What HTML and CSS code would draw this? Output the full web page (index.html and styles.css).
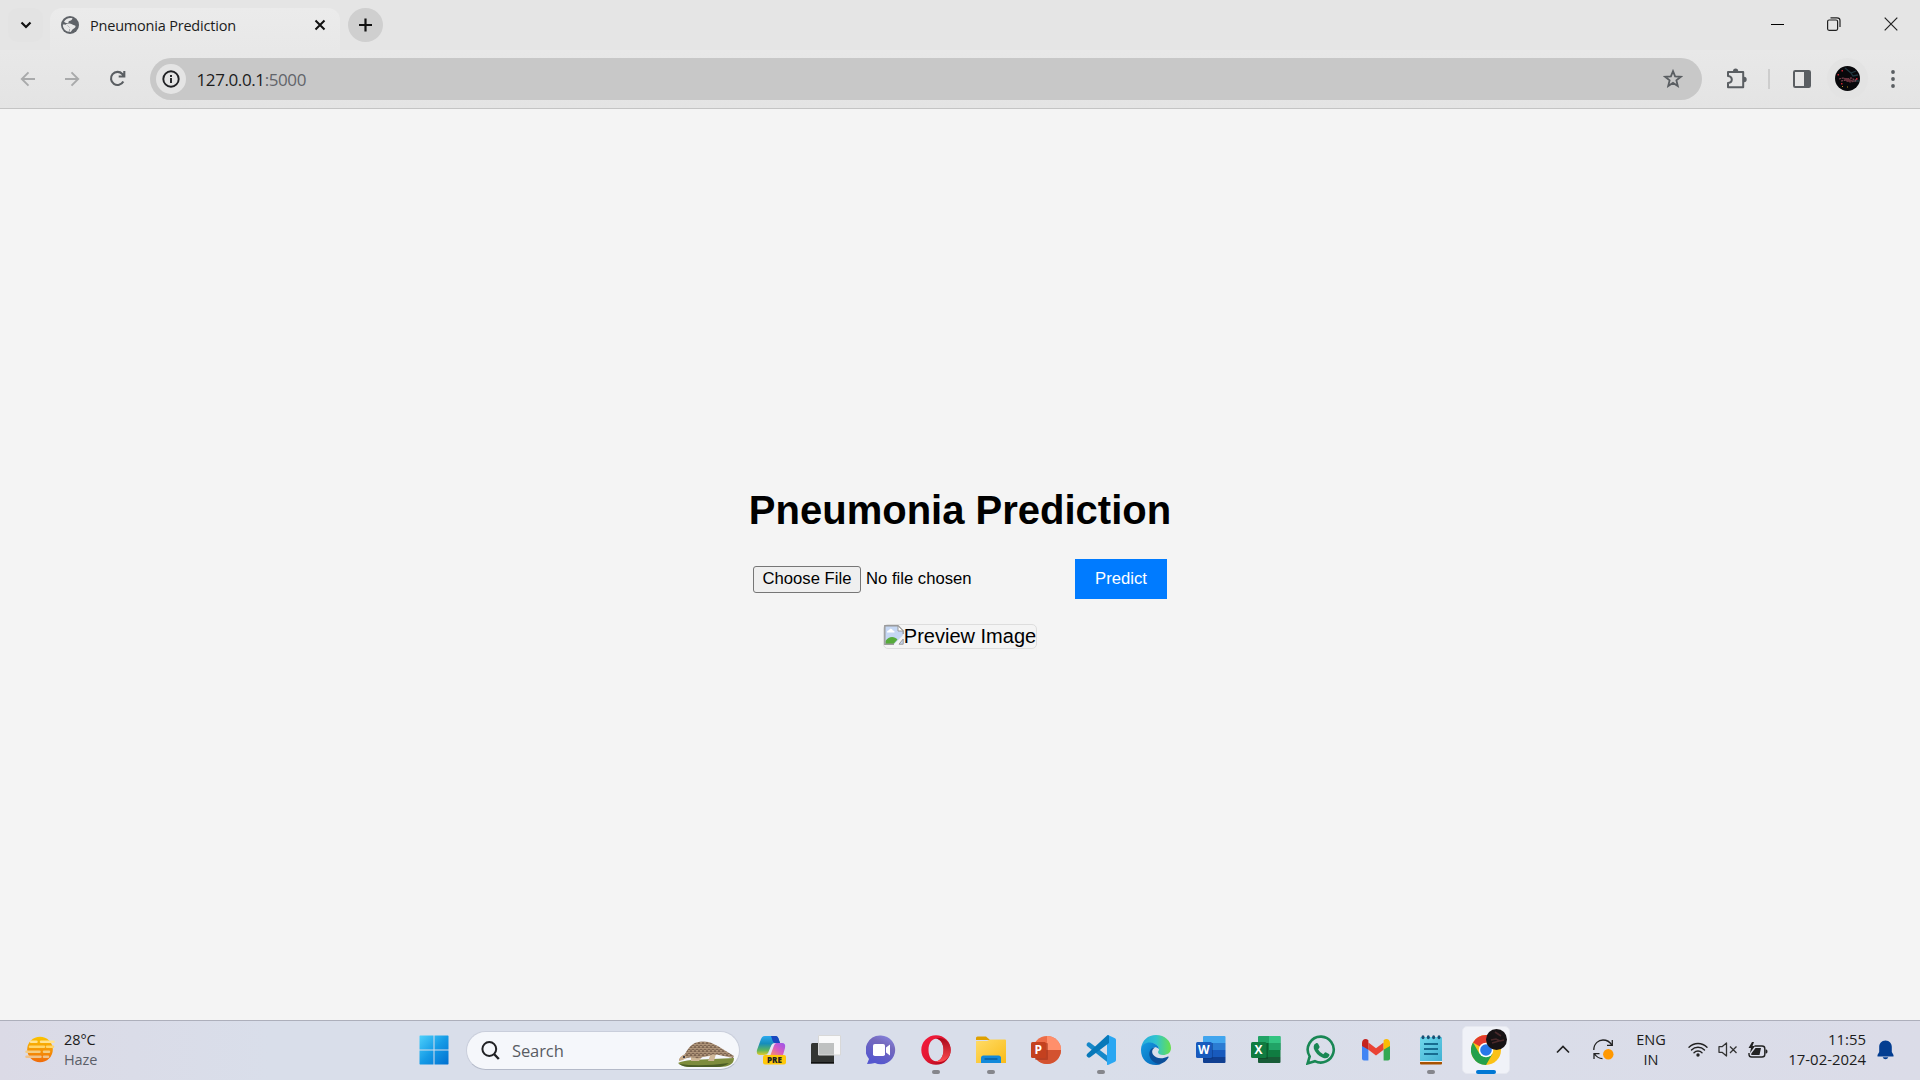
FILE: index.html
```html
<!DOCTYPE html>
<html lang="en">
<head>
<meta charset="utf-8">
<title>Pneumonia Prediction</title>
<link rel="stylesheet" href="styles.css">
</head>
<body>
<div class="screen">
  <header class="tabstrip">
    <div class="tabsearch"><svg width="12" height="8" viewBox="0 0 12 8"><path d="M1.500 1.500 6 6l4.500-4.500" fill="none" stroke="#111" stroke-width="2.200"/></svg></div>
    <div class="tab">
      <svg width="18" height="18" viewBox="0 0 18 18"><circle cx="9" cy="9" r="9" fill="#5f6368"/><path d="M11.500 2.300C8 1.200 4.500 3 3 5.700c1.200 1.200 2.800 1.500 4.500 1.500-.3-1.500.2-2.400 1.700-2.500.9 0 2-.8 2.300-2.400zM1.900 8.500c2 .1 4.800.2 5.600 2 .4 1 1.500.8 1.700 1.800.2 1-1.100 1.100-1.200 2.200l-.2 1.300C4.300 15.300 1.700 12.300 1.900 8.500z" fill="#e9e9e9"/><path d="M5 8.200c2-.8 4.500-1 6 .1 1.200.9 1.800 1 2.900 1.200 1 .2.700 1.600 0 2.300-1.200 1.200-2.500 1.300-3.300 2.900-.4.700-1.100 1.300-1.900 1.400-.8-.5-.2-1.900.3-2.900.4-.9-.5-1.500-1-2.200C7 9.500 6 9.200 5 9z" fill="#e9e9e9"/></svg>
      <span class="tab-title">Pneumonia Prediction</span>
      <svg class="tab-close" width="12" height="12" viewBox="0 0 12 12"><path d="m1.500 1.500 9 9m0-9-9 9" stroke="#111" stroke-width="2"/></svg>
    </div>
    <div class="newtab"><svg width="13" height="14" viewBox="0 0 13 14"><path d="M6.500.5v13M0 7h13" stroke="#111" stroke-width="2.200"/></svg></div>
    <div class="window-controls">
      <svg width="14" height="14" viewBox="0 0 14 14"><path d="M1 7.500h13" stroke="#000"/></svg>
      <svg width="14" height="14" viewBox="0 0 14 14"><rect x=".6" y="3" width="10" height="10.300" rx="1.500" fill="none" stroke="#222" stroke-width="1.200"/><path d="M3.500.8H10Q13 .8 13 3.500V10" fill="none" stroke="#222" stroke-width="1.200"/></svg>
      <svg width="14" height="14" viewBox="0 0 14 14"><path d="m.7.700 12.600 12.600m0-12.600L.7 13.300" stroke="#222" stroke-width="1.200"/></svg>
    </div>
  </header>
  <nav class="toolbar">
    <div class="nav-buttons">
      <svg width="15" height="16" viewBox="0 0 15 16"><path d="M15 8H2M8.500 1.300 1.800 8l6.700 6.700" fill="none" stroke="#a9aaab" stroke-width="1.900"/></svg>
      <svg width="15" height="16" viewBox="0 0 15 16"><path d="M0 8h13M6.500 1.300 13.200 8l-6.700 6.700" fill="none" stroke="#a9aaab" stroke-width="1.900"/></svg>
      <svg width="17" height="17" viewBox="0 0 17 17"><path d="M14.300 11.400A6.500 6.500 0 1 1 13.300 4l1.500 1.700M15.300 1v5.500H9.700" fill="none" stroke="#5a5e62" stroke-width="2.100"/></svg>
    </div>
    <div class="omnibox">
      <div class="site-info"><svg width="18" height="18" viewBox="0 0 18 18"><circle cx="9" cy="9" r="7.700" fill="none" stroke="#202124" stroke-width="1.900"/><path d="M9 8v5M9 5v1.900" stroke="#202124" stroke-width="1.900"/></svg></div>
      <span class="url">127.0.0.1<span class="port">:5000</span></span>
      <svg class="star" width="20" height="20" viewBox="0 0 20 20"><path d="m10 2.200 2.100 5.200 5.700.4-4.400 3.600 1.400 5.600-4.800-3.100-4.800 3.100 1.400-5.600L2.200 7.800l5.700-.4z" fill="none" stroke="#5a5e62" stroke-width="1.800"/></svg>
    </div>
    <svg class="ext" width="22" height="22" viewBox="0 0 22 22"><path d="M2 4h15.200v15.200H2v-4.100c3-.3 3.800-1.700 3.800-3.500S5 8.200 2 7.900z" fill="none" stroke="#5a5e62" stroke-width="2" stroke-linejoin="round"/><path d="M7 3a2.600 2.600 0 0 1 5.200 0zM18 8.800a2.600 2.600 0 0 1 0 5.400z" fill="#5a5e62"/></svg>
    <span class="divider"></span>
    <svg class="panel" width="18" height="18" viewBox="0 0 18 18"><rect x="1" y="1" width="16" height="16" rx="1.200" fill="none" stroke="#5a5e62" stroke-width="2"/><path d="M11 1h6v16h-6z" fill="#5a5e62"/></svg>
    <div class="profile"><svg width="25" height="25" viewBox="0 0 25 25"><circle cx="12.500" cy="12.500" r="12.500" fill="#08080b"/><path d="m10 2 6 5 5-2M16 7l2 3 5-1M18 15h6" stroke="#203840" stroke-width="1.300" fill="none"/><path d="m4 13 4-1 4 1 4-1 4 2 3-1M6 15l5-1 4 2 6-1" stroke="#7d4450" stroke-width="1.200" stroke-dasharray="2 .8" fill="none"/><path d="M8 12h4l5 2 3 1-8 1z" fill="#66313c"/><path d="M2.500 8H4v1.500H2.500zM6.500 4H8v1.500H6.500zM6 17h1.500v1.500H6zM21 12h1.500v1.500H21z" fill="#c22330"/><path d="M7 20h1v1H7zM12 20.500h1v1h-1z" fill="#b58b27"/></svg></div>
    <svg class="menu" width="4" height="18" viewBox="0 0 4 18"><g fill="#5a5e62"><circle cx="2" cy="2" r="1.900"/><circle cx="2" cy="9" r="1.900"/><circle cx="2" cy="16" r="1.900"/></g></svg>
  </nav>

  <main class="page">
    <h1 class="heading">Pneumonia Prediction</h1>
    <form class="upload">
      <button type="button" class="choose">Choose File</button>
      <span class="file-name">No file chosen</span>
      <button type="button" class="predict">Predict</button>
    </form>
    <div class="preview">
      <svg width="20" height="20" viewBox="0 0 20 20"><path d="M.8.800h13.200l5.200 5.200v4L10 19.300H.8z" fill="#c5d7f3"/><path d="M3 7.500C3 5 5.500 5.600 5.800 4c2-.9 3 .8 3 1.600 1.500 0 1.800 1 1.700 1.900z" fill="#fff"/><path d="M1.500 19v-3c3-5 9-5 12-1.500L9.500 19z" fill="#56ab3a"/><path d="M10 19.300.8 19.200V.8H14l5.200 5.200v3" fill="none" stroke="#9a9a9a" stroke-width="1.400"/><path d="M14 .8V6h5.200z" fill="#fff" stroke="#9a9a9a"/><path d="M15 19.200h4.200V14z" fill="#c5d7f3" stroke="#9a9a9a"/></svg><span>Preview Image</span>
    </div>
  </main>

  <footer class="taskbar">
    <div class="weather">
      <svg width="31" height="27" viewBox="0 0 31 27"><defs><linearGradient id="sun" x2="0" y2="1"><stop stop-color="#fbc400"/><stop offset="1" stop-color="#f06a0b"/></linearGradient></defs><circle cx="15" cy="13.500" r="12.800" fill="url(#sun)"/><g stroke-width="2.500" stroke-linecap="round"><path d="M6 5.700h5.500M16 5.700h12.500" stroke="#ffe391"/><path d="M5 10.700h14M22 10.700h6" stroke="#ffd66a"/><path d="M1.500 15.700h13M19 15.700h5" stroke="#f3cc83"/><path d="M1.500 20.700h14M19 20.700h4" stroke="#f0c288"/></g></svg>
      <div class="weather-text"><span>28°C</span><span class="muted">Haze</span></div>
    </div>
    <div class="start"><svg width="30" height="30" viewBox="0 0 30 30"><defs><linearGradient id="win" x2="1" y2="1"><stop stop-color="#4dd0fb"/><stop offset=".5" stop-color="#159be6"/><stop offset="1" stop-color="#006fd0"/></linearGradient></defs><path d="M1 .5h13.500v14H.5V1zM15.500.5H29l.5.5v13.500h-14zM.5 15.500h14v14H1l-.5-.5zM15.500 15.500h14V29l-.5.500H15.500z" fill="url(#win)"/></svg></div>
    <div class="search">
      <svg width="19" height="19" viewBox="0 0 19 19"><circle cx="8.300" cy="8" r="6.900" fill="none" stroke="#202124" stroke-width="2"/><path d="m13 13 4.800 5" stroke="#202124" stroke-width="2.400"/></svg>
      <span class="search-text">Search</span>
      <svg class="pangolin" width="58" height="28" viewBox="0 0 58 28"><defs><pattern id="scales" width="4" height="4" patternUnits="userSpaceOnUse"><path d="M0 0h4v4H0z" fill="#b0967a"/><path d="M0 1q2 3 4 0M-2 3q2 3 4 0M2 3q2 3 4 0" fill="none" stroke="#675040" stroke-width=".8"/></pattern></defs><path d="M1 23q4-2 14-3l42-2q0 9-15 9H14q-9 0-13-4z" fill="#7d8c3c"/><path d="M2 24q22 3 50-1-5 4-13 4H14q-8 0-12-3z" fill="#4b5d26"/><path d="M14 15v6h8l3-4 8-1-2 5h6l2-7z" fill="#cfb797"/><path d="M2 20q1-3 6-6C12 6 17 1.500 26 1.500c8 0 13 3.500 18 6.500l13 8-1 2-14-3q-5-1-8 0L20 18.500q-4-2-10-.5-5 1-8 3z" fill="url(#scales)"/><path d="M2 20q1-4 5-5l3 2-4 3-4 1z" fill="#c9ac8c"/><circle cx="7" cy="17" r="1" fill="#172033"/></svg>
    </div>
    <div class="apps">
      <div class="app"><svg width="30" height="30" viewBox="0 0 30 30"><defs><linearGradient id="cpa" x2="0" y2="1"><stop stop-color="#2ba9ef"/><stop offset=".4" stop-color="#168dbb"/><stop offset=".75" stop-color="#5db45d"/><stop offset="1" stop-color="#e5cb28"/></linearGradient><linearGradient id="cpb" x1="1" x2="0" y2="1"><stop stop-color="#9755ed"/><stop offset=".5" stop-color="#d65bc2"/><stop offset="1" stop-color="#ff985b"/></linearGradient></defs><path d="M9 1h10q3 0 4 4l1 3h-5q-3 0-4 3l-3 7q-1 2-4 2H4q-4 0-3-5L5 4q1-3 4-3z" fill="url(#cpa)"/><path d="M15 1h5q2 0 3 4l1 3h-5q-2 0-3-4z" fill="#1947bf"/><path d="M21 8h5q4 0 3 5l-2 7H13l3-8q1-4 5-4z" fill="url(#cpb)"/><path d="M19 8.500q-3 0-4.500 4.500L12 20h2.500L18 10.500q.5-1.500 2-2z" fill="#e4e7f2"/><rect x="7" y="20" width="23" height="9.500" rx="2" fill="#ffc80a"/><text x="18.500" y="27.700" text-anchor="middle" class="pre">PRE</text></svg></div>
      <div class="app"><svg width="30" height="30" viewBox="0 0 30 30"><path d="M0 9.500q0-1.500 1.500-1.500H23v20.500H0z" fill="#333533"/><path d="M0 27h23v1.500H0z" fill="#111"/><path d="M7.500.5h22v19.500h-22z" fill="#fafafa" opacity=".96"/><path d="M7.500 8H23v12H7.500z" fill="#bfc1c1"/><path d="M7.500.5h22v19.500h-22z" fill="none" stroke="#d8d8d8"/></svg></div>
      <div class="app"><svg width="30" height="30" viewBox="0 0 30 30"><defs><linearGradient id="chat" x1="1" x2=".5" y2="1"><stop stop-color="#8b8ce8"/><stop offset=".4" stop-color="#7569bd"/><stop offset="1" stop-color="#5557cf"/></linearGradient></defs><path d="M15 .5a14.400 14.400 0 1 1-6 27.600Q5 29 1 29l2-5A14.400 14.400 0 0 1 15 .5z" fill="url(#chat)"/><rect x="7" y="9" width="12" height="12" rx="1.800" fill="#fff"/><path d="m20 12.500 4-3v11l-4-3z" fill="#fff"/></svg></div>
      <div class="app"><svg width="30" height="30" viewBox="0 0 30 30"><defs><linearGradient id="op" x2="1" y2="1"><stop stop-color="#f51a3d"/><stop offset=".5" stop-color="#e21832"/><stop offset="1" stop-color="#a50013"/></linearGradient><linearGradient id="op2" x2="0" y2="1"><stop stop-color="#a8081a"/><stop offset="1" stop-color="#ff4d51"/></linearGradient></defs><path fill-rule="evenodd" d="M15 .3a14.700 14.700 0 1 1 0 29.400A14.700 14.700 0 0 1 15 .3zm0 3.500c-4.500 0-7.500 5-7.500 11.200s3 11.200 7.500 11.200S22.500 21 22.500 15 19.500 3.800 15 3.800z" fill="url(#op)"/><path d="M15 3.800c5-3 14.700 2 14.700 11.200S20 29.200 15 26.200c4.500 0 7.500-5 7.500-11.200S19.500 3.800 15 3.800z" fill="url(#op2)"/></svg><i class="running"></i></div>
      <div class="app"><svg width="30" height="30" viewBox="0 0 30 30"><defs><linearGradient id="fol" x2="1" y2="1"><stop stop-color="#ffdc67"/><stop offset="1" stop-color="#f9bb18"/></linearGradient></defs><path d="M0 3q0-1.500 1.500-1.500H10L14 5H0z" fill="#dfa000"/><path d="M0 6h11l3-1.500h15q1 0 1 1V28H0z" fill="url(#fol)"/><path d="M5 28v-5q0-2.500 2.500-2.500h15q2.500 0 2.500 2.500v5z" fill="#1289da"/><path d="M8.500 24h13" stroke="#075795" stroke-width="1.300"/></svg><i class="running"></i></div>
      <div class="app"><svg width="30" height="30" viewBox="0 0 30 30"><circle cx="16" cy="15" r="14" fill="#ed6c47"/><path d="M16 1a14 14 0 0 1 14 14H16z" fill="#ff8f6b"/><path d="M2 15h28a14 14 0 0 1-28 0z" fill="#d35230"/><rect x="4" y="8" width="13" height="17" rx="1" fill="#9e2d16" opacity=".5"/><rect y="7" width="15" height="16" rx="1.500" fill="#c4411f"/><text x="7.300" y="19" text-anchor="middle" class="office">P</text></svg></div>
      <div class="app"><svg width="30" height="30" viewBox="0 0 30 30"><path d="M1 8.500q1.500-2 3.500-.5L23 22v6.500L1 11q-1-1 0-2.500z" fill="#1688c9"/><path d="M22 0l7 3.200q1 .5 1 1.800v20q0 1.300-1 1.800L22 30q-1 .3-1-1V1q0-1.300 1-1z" fill="#2aa7f2"/><path d="M1 21.500q-1-1 0-2.500L20.500 1Q21.500 0 23 .5V8L4.500 22q-2 1.500-3.500-.500z" fill="#0778b9"/></svg><i class="running"></i></div>
      <div class="app"><svg width="30" height="30" viewBox="0 0 30 30"><defs><linearGradient id="ed1"><stop stop-color="#25a9dd"/><stop offset=".5" stop-color="#30c4cf"/><stop offset="1" stop-color="#68e04b"/></linearGradient><linearGradient id="ed2" x2="1" y2="1"><stop stop-color="#159be0"/><stop offset="1" stop-color="#0564b8"/></linearGradient></defs><path d="M0 14C1 5 7 0 15 0c9 0 15 6 15 13 0 5-4 7-8 7-3 0-5-1-5-3 0-1 1-1 1-3 0-3-4-6-9-6-5 0-8 3-9 6z" fill="url(#ed1)"/><path d="M0 15C0 10 4 7.500 9 7.500c4 0 9 3 9 6.500-5-4-8 0-8 4 0 7 6 11 11 10.500-2 1-4 1.500-6 1.500C6 30 0 24 0 15z" fill="url(#ed2)"/><path d="M14 12.500c-3 2-3.500 4-2 7 2.500 4 9 5 15 2q1 0 .5 1-3 5-8.500 6.500C12 29 7 22 8.500 17c.8-2.500 2.500-4.500 5.500-4.500z" fill="#0c4f99"/></svg></div>
      <div class="app"><svg width="30" height="30" viewBox="0 0 30 30"><path d="M8 1h20.500q1 0 1 1v6H7V2q0-1 1-1z" fill="#41a5ee"/><path d="M7 8h22.500v7H7z" fill="#2b7cd3"/><path d="M7 15h22.500v7H7z" fill="#185abd"/><path d="M7 22h22.500v5q0 1-1 1H8q-1 0-1-1z" fill="#103f91"/><path d="M7 8h10v16H7z" fill="#0c367c" opacity=".45"/><rect y="7" width="16" height="16" rx="1.500" fill="#185abd"/><text x="7.800" y="19" text-anchor="middle" class="office">W</text></svg></div>
      <div class="app"><svg width="30" height="30" viewBox="0 0 30 30"><path d="M8 1h20.500q1 0 1 1v6H7V2q0-1 1-1z" fill="#21a366"/><path d="M18 1h10.500q1 0 1 1v6H18z" fill="#33c481"/><path d="M7 8h22.500v7H7z" fill="#107c41"/><path d="M18 8h11.500v7H18z" fill="#21a366"/><path d="M7 15h22.500v7H7z" fill="#107c41"/><path d="M7 22h22.500v5q0 1-1 1H8q-1 0-1-1z" fill="#185c37"/><path d="M7 8h10v16H7z" fill="#06411e" opacity=".45"/><rect y="7" width="15.500" height="16" rx="1.500" fill="#107c41"/><text x="7.600" y="19" text-anchor="middle" class="office">X</text></svg></div>
      <div class="app"><svg width="30" height="30" viewBox="0 0 30 30"><path d="M15.400 1.600a13 13 0 1 1-6.500 24.600L1.600 28.400l2.100-7A13 13 0 0 1 15.400 1.600z" fill="none" stroke="#198754" stroke-width="2.600"/><path d="M8.300 9.500 10.400 8q1-.4 1.600.6l1.500 3q.3.800-.3 1.500l-1.100 1.300q2 3.500 5.200 4.800l1.600-1.700q.5-.5 1.200-.1l2.900 1.700q.8.600.3 1.700-2 4-7 1.700-6.500-3-8.500-9-.4-2.400.5-4z" fill="#198754"/></svg></div>
      <div class="app"><svg width="28" height="22" viewBox="0 0 28 22"><path d="M0 5v14.500Q0 21.500 2 21.500h4.400V9z" fill="#4285f4"/><path d="M28 5v14.500q0 2-2 2h-4.400V9z" fill="#34a853"/><path d="M6.400 3.500 14 9.200l7.600-5.700v7.300L14 16.500l-7.600-5.700z" fill="#ea4335"/><path d="M0 7V4C0 0 4-1 6.400 1.300v9.500L0 7z" fill="#c5221f"/><path d="M28 7V4c0-4-4-5-6.400-2.700v9.500z" fill="#fbbc04"/></svg></div>
      <div class="app"><svg width="24" height="30" viewBox="0 0 24 30"><defs><linearGradient id="note" x2="1" y2="1"><stop stop-color="#70d8ec"/><stop offset="1" stop-color="#41b1d3"/></linearGradient></defs><path d="M1 25h22v3.500q0 1-1 1H2q-1 0-1-1z" fill="#a75200"/><path d="M1 3h22v24H1z" fill="#f4eee8"/><path d="M2 2h20q1 0 1 1v23H1V3q0-1 1-1z" fill="url(#note)"/><path d="M5 9h14M5 14h14M5 19h14" stroke="#176b90" stroke-width="1.800"/><g fill="#164f73"><ellipse cx="4" cy="2.200" rx="1.500" ry="2"/><ellipse cx="9.300" cy="2.200" rx="1.500" ry="2"/><ellipse cx="14.600" cy="2.200" rx="1.500" ry="2"/><ellipse cx="20" cy="2.200" rx="1.500" ry="2"/></g></svg><i class="running"></i></div>
      <div class="app active"><svg width="36" height="36" viewBox="0 0 36 36"><circle cx="15" cy="21" r="15" fill="#fbc116"/><path d="M15 21 2 13.500A15 15 0 0 1 28 13.500H15z" fill="#e33b2e"/><path d="M2 13.500A15 15 0 0 0 15 36l6.500-11.300L15 21l-6.500 3.700z" fill="#25a04b"/><circle cx="15" cy="21" r="7.300" fill="#fff"/><circle cx="15" cy="21" r="5.800" fill="#2877e8"/><circle cx="25.500" cy="10.500" r="10.500" fill="#171315"/><path d="m20 11 5-1 4 2 4-1M21 14l7-2M24 3l6 4" stroke="#49292b" stroke-width="1.600" fill="none"/></svg><i class="running current"></i></div>
    </div>
    <div class="tray">
      <svg class="tray-up" width="14" height="9" viewBox="0 0 14 9"><path d="m1 7.500 6-6 6 6" fill="none" stroke="#222" stroke-width="1.700"/></svg>
      <svg class="sync" width="21" height="21" viewBox="0 0 21 21"><path d="M.8 11C.8 4 6 1 10 1c4 0 7 2 8.800 5M19.300 1v5.300H14M1 20v-5.300h5.500M1.500 15q3 4.500 8 4.600" fill="none" stroke="#222" stroke-width="1.300"/><circle cx="15.300" cy="15.300" r="5.200" fill="#ff9800"/></svg>
      <div class="lang"><span>ENG</span><span>IN</span></div>
      <svg class="wifi" width="20" height="15" viewBox="0 0 20 15"><g fill="none" stroke="#222" stroke-width="1.400" stroke-linecap="round"><path d="M1 5.200a12.700 12.700 0 0 1 18 0M3.500 8a9.200 9.200 0 0 1 13 0M6 10.700a5.700 5.700 0 0 1 8 0"/></g><circle cx="10" cy="13" r="1.700" fill="#222"/></svg>
      <svg class="volume" width="20" height="15" viewBox="0 0 20 15"><path d="M1 4.700h3L8.500 1v13L4 10.300H1zM12 4.500l6.500 6.500m0-6.500L12 11" fill="none" stroke="#333" stroke-width="1.300" stroke-linejoin="round"/></svg>
      <svg class="battery" width="20" height="16" viewBox="0 0 20 16"><path d="M6.500 4H14q2.800 0 2.800 2.500v6Q16.800 15 14 15H3.600Q1 15 1 12.500V11" fill="none" stroke="#222" stroke-width="1.400"/><path d="M17.500 7.500h.7q1.300 0 1.300 2t-1.300 2h-.7zM4 0 .5 6H3l-1 5 5-7H4.500L6 0zM7.500 6H13l-1.500 7H3.300v-1.500z" fill="#222"/></svg>
      <div class="clock"><span>11:55</span><span>17-02-2024</span></div>
      <svg class="bell" width="17" height="20" viewBox="0 0 17 20"><path d="M8.500.5c4 0 6.300 3 6.300 6.500v5l1.700 3v1.500H.5V15l1.700-3V7C2.200 3.500 4.500.5 8.500.5zM5.700 17.300h5.600q-.7 2-2.800 2t-2.800-2z" fill="#043e91"/></svg>
    </div>
  </footer>
</div>
</body>
</html>
```
FILE: styles.css
```css
* { box-sizing: border-box; }
body { margin: 0; overflow: hidden; font-family: "Open Sans", "Noto Sans", sans-serif; color: #1c1c1c; }
svg { display: block; flex: none; }
.screen { width: 1920px; height: 1080px; display: flex; flex-direction: column; }

.tabstrip { height: 50px; flex: none; display: flex; align-items: flex-start; padding: 8px 22px 0 8px; background: #e5e5e5; }
.tabsearch { width: 35px; height: 34px; border-radius: 10px; background: #e3e3e3; display: flex; align-items: center; justify-content: center; }
.tab { width: 290px; height: 42px; margin-left: 7px; padding: 0 14px 8px 11px; border-radius: 12px 12px 0 0; background: linear-gradient(#ebebeb, #e8e8e8); display: flex; align-items: center; }
.tab-title { margin-left: 11px; font-size: 14.500px; letter-spacing: -.2px; white-space: nowrap; }
.tab-close { margin-left: auto; }
.newtab { width: 35px; height: 34px; margin-left: 8px; border-radius: 50%; background: #cfcfcf; display: flex; align-items: center; justify-content: center; }
.window-controls { margin: 9px 0 0 auto; display: flex; gap: 43px; }

.toolbar { height: 59px; flex: none; display: flex; align-items: center; padding: 0 21px 1px 20px; background: linear-gradient(#e8e8e8, #e4e4e4); border-bottom: 1px solid #c4c4c4; }
.nav-buttons { width: 130px; flex: none; display: flex; align-items: center; gap: 29.500px; }
.omnibox { width: 1552px; flex: none; height: 42px; border-radius: 21px; background: #c8c8c8; display: flex; align-items: center; padding: 0 19.500px 0 6px; }
.site-info { width: 30px; height: 30px; border-radius: 50%; background: #e4e4e4; display: flex; align-items: center; justify-content: center; }
.url { margin: 1px 0 0 10.500px; font-size: 17px; letter-spacing: -.4px; }
.port { color: #62646a; }
.star { margin-left: auto; }
.ext { margin-left: 24px; }
.divider { width: 2px; height: 20px; margin-left: 20px; background: #cdcdcd; }
.panel { margin-left: 23px; }
.profile { width: 41px; height: 41px; margin-left: 16px; border-radius: 50%; background: #e3e3e3; display: flex; align-items: center; justify-content: center; }
.menu { margin-left: 22.500px; }

.page { flex: 1; display: flex; flex-direction: column; align-items: center; background: #f4f4f4; color: #000; padding-top: 378px; font-family: "Liberation Sans", Arial, sans-serif; }
.heading { margin: 0; font-size: 40px; line-height: 46px; }
.upload { width: 414px; height: 40px; margin-top: 26px; display: flex; align-items: center; }
.choose { width: 108px; height: 27px; padding: 0 0 1px; border: 1px solid #767676; border-radius: 3px; background: #efefef; color: #000; font: 16.667px/23px "Liberation Sans", Arial, sans-serif; }
.file-name { margin: 0 0 1px 5px; font-size: 16.667px; white-space: nowrap; }
.predict { width: 92px; height: 40px; margin-left: auto; padding: 0 0 1px; border: 0; background: #007bff; color: #fff; font: 16.667px "Liberation Sans", Arial, sans-serif; }
.preview { height: 25px; margin-top: 25px; border: 1px solid #ddd; border-radius: 5px; display: flex; font-size: 20px; line-height: 22px; white-space: nowrap; }

.taskbar { height: 60px; flex: none; display: flex; align-items: center; border-top: 1px solid #adafbb; background: linear-gradient(90deg, #dbdae6, #d9deea 14%, #d9deea 55%, #dbdce8); }
.weather { width: 407px; padding: 0 0 2px 25px; display: flex; align-items: center; }
.weather-text { margin-left: 8px; display: flex; flex-direction: column; font-size: 14.500px; letter-spacing: -.1px; line-height: 20px; }
.muted { color: #5b5e68; }
.start { width: 54px; padding-bottom: 1px; display: flex; justify-content: center; }
.search { width: 274px; height: 39px; margin: 0 0 1px 5px; border: 1px solid #c9cedb; border-bottom-color: #b4bac9; border-radius: 20px; background: #f5f7fb; display: flex; align-items: center; padding: 0 4px 0 14px; }
.search-text { margin-left: 12px; color: #595c63; font-size: 16.500px; letter-spacing: -.1px; }
.pangolin { margin: 8px 0 0 auto; }
.apps { height: 59px; margin-left: 3px; display: flex; }
.app { width: 55px; height: 59px; padding-bottom: 2px; display: flex; align-items: center; justify-content: center; position: relative; }
.active::before { content: ""; position: absolute; inset: 5px 3px 6px 4px; border-radius: 5px; background: #f0f2f8; border: 1px solid #e6e8f0; }
.active svg { position: relative; margin: -5px 0 0 6px; }
.running { position: absolute; bottom: 6px; left: 24px; width: 8px; height: 4px; border-radius: 2px; background: #85868c; }
.current { left: 18px; width: 20px; background: #0078d4; }
.pre { font: 800 8px "Open Sans", sans-serif; fill: #222; }
.office { font: bold 12px "Open Sans", sans-serif; fill: #fff; }
.tray { margin-left: auto; padding: 0 26px 2px 0; display: flex; align-items: center; }
.sync { margin-left: 23px; }
.lang { width: 34px; margin: 1px 0 0 20px; text-align: center; }
.lang, .clock { display: flex; flex-direction: column; font-size: 14.500px; line-height: 20px; white-space: nowrap; }
.wifi { margin-left: 20px; }
.volume { margin-left: 10px; }
.battery { margin-left: 10px; }
.clock { width: 84px; margin: -1px 0 0 14px; align-items: flex-end; font-size: 14.900px; }
.bell { margin-left: 11px; }
```
